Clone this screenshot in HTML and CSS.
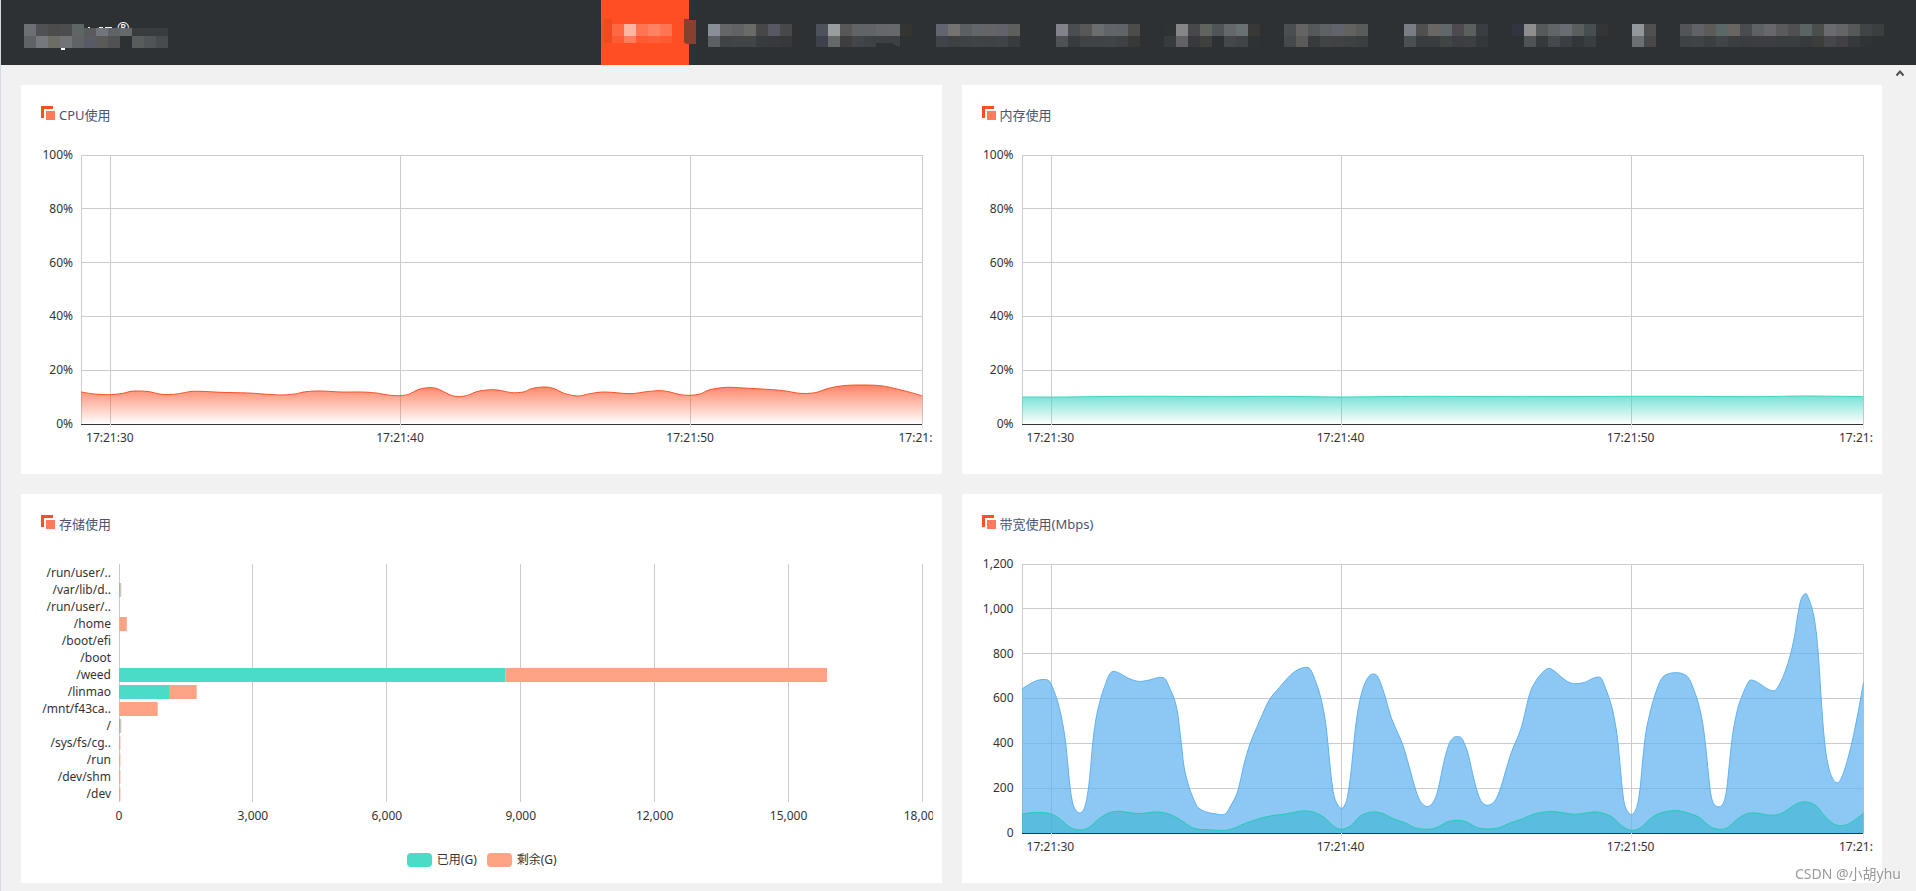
FILE: index.html
```html
<!DOCTYPE html>
<html lang="zh-CN">
<head>
<meta charset="utf-8">
<title>CPU使用</title>
<link rel="stylesheet" href="styles.css">
</head>
<body>
<header class="topbar">
  <a class="logo" href="#">
    <span class="reg">®</span>
    <svg class="mosaic" data-mosaic="logo" width="144" height="28" aria-hidden="true"></svg>
  </a>
  <nav>
    <ul class="nav">
      <li class="active"><a href="#"><svg class="mosaic" data-mosaic="n1" width="84" height="28" aria-hidden="true"></svg></a></li>
      <li><a href="#"><svg class="mosaic" data-mosaic="n2" width="84" height="28" aria-hidden="true"></svg></a></li>
      <li><a href="#"><svg class="mosaic" data-mosaic="n3" width="96" height="28" aria-hidden="true"></svg></a></li>
      <li><a href="#"><svg class="mosaic" data-mosaic="n4" width="96" height="28" aria-hidden="true"></svg></a></li>
      <li><a href="#"><svg class="mosaic" data-mosaic="n5" width="84" height="28" aria-hidden="true"></svg></a></li>
      <li><a href="#"><svg class="mosaic" data-mosaic="n6" width="96" height="28" aria-hidden="true"></svg></a></li>
      <li><a href="#"><svg class="mosaic" data-mosaic="n7" width="96" height="28" aria-hidden="true"></svg></a></li>
      <li><a href="#"><svg class="mosaic" data-mosaic="n8" width="84" height="28" aria-hidden="true"></svg></a></li>
      <li><a href="#"><svg class="mosaic" data-mosaic="n9" width="96" height="28" aria-hidden="true"></svg></a></li>
      <li><a href="#"><svg class="mosaic" data-mosaic="n10" width="24" height="28" aria-hidden="true"></svg></a></li>
      <li><a href="#"><svg class="mosaic" data-mosaic="n11" width="204" height="28" aria-hidden="true"></svg></a></li>
    </ul>
  </nav>
</header>

<div class="page">
  <main class="cards">
    <section class="card">
      <h2 class="title"><svg width="14" height="14" aria-hidden="true"><path d="M0 0h12v3H3v9H0z" fill="#ff4e24"/><path d="M5 5h9v9H5z" fill="#ff7a5c"/></svg>CPU使用</h2>
      <div class="chart">
        <ul class="y-labels"><li>100%</li><li>80%</li><li>60%</li><li>40%</li><li>20%</li><li>0%</li></ul>
        <svg class="plot" id="cpu" aria-hidden="true"></svg>
        <ul class="x-labels time"><li>17:21:30</li><li>17:21:40</li><li>17:21:50</li><li>17:21:</li></ul>
      </div>
    </section>

    <section class="card">
      <h2 class="title"><svg width="14" height="14" aria-hidden="true"><path d="M0 0h12v3H3v9H0z" fill="#ff4e24"/><path d="M5 5h9v9H5z" fill="#ff7a5c"/></svg>内存使用</h2>
      <div class="chart">
        <ul class="y-labels"><li>100%</li><li>80%</li><li>60%</li><li>40%</li><li>20%</li><li>0%</li></ul>
        <svg class="plot" id="memory" aria-hidden="true"></svg>
        <ul class="x-labels time"><li>17:21:30</li><li>17:21:40</li><li>17:21:50</li><li>17:21:</li></ul>
      </div>
    </section>

    <section class="card">
      <h2 class="title"><svg width="14" height="14" aria-hidden="true"><path d="M0 0h12v3H3v9H0z" fill="#ff4e24"/><path d="M5 5h9v9H5z" fill="#ff7a5c"/></svg>存储使用</h2>
      <div class="chart storage">
        <ul class="row-labels">
          <li>/run/user/..</li><li>/var/lib/d..</li><li>/run/user/..</li><li>/home</li><li>/boot/efi</li><li>/boot</li><li>/weed</li><li>/linmao</li><li>/mnt/f43ca..</li><li>/</li><li>/sys/fs/cg..</li><li>/run</li><li>/dev/shm</li><li>/dev</li>
        </ul>
        <svg class="plot" id="storage" aria-hidden="true"></svg>
        <ul class="x-labels size"><li class="zero">0</li><li>3,000</li><li>6,000</li><li>9,000</li><li>12,000</li><li>15,000</li><li>18,000</li></ul>
      </div>
      <ul class="legend">
        <li><i class="swatch used"></i>已用(G)</li>
        <li><i class="swatch free"></i>剩余(G)</li>
      </ul>
    </section>

    <section class="card">
      <h2 class="title"><svg width="14" height="14" aria-hidden="true"><path d="M0 0h12v3H3v9H0z" fill="#ff4e24"/><path d="M5 5h9v9H5z" fill="#ff7a5c"/></svg>带宽使用(Mbps)</h2>
      <div class="chart">
        <ul class="y-labels"><li>1,200</li><li>1,000</li><li>800</li><li>600</li><li>400</li><li>200</li><li>0</li></ul>
        <svg class="plot" id="bandwidth" aria-hidden="true"></svg>
        <ul class="x-labels time"><li>17:21:30</li><li>17:21:40</li><li>17:21:50</li><li>17:21:</li></ul>
      </div>
    </section>
  </main>
  <div class="rail">
    <button type="button" class="scroll-up"><svg width="10" height="8" aria-hidden="true"><path d="M1.5 6.5 5 2.5l3.5 4" fill="none" stroke="#505050" stroke-width="2"/></svg></button>
  </div>
</div>
<p class="watermark">CSDN @小胡yhu</p>
<script src="charts.js"></script>
</body>
</html>
```

FILE: styles.css
```css
* { box-sizing: border-box; }

body {
  margin: 0;
  min-height: 100vh;
  border-left: 1px solid #d5dbe6;
  background: #f1f1f1;
  color: #333;
  font: 12px/18px "Noto Sans", "Noto Sans CJK SC", sans-serif;
  overflow: hidden;
}

ul { list-style: none; margin: 0; padding: 0; }

.topbar {
  display: flex;
  justify-content: space-between;
  height: 65px;
  padding: 0 32px 0 23px;
  background: #2d3134;
}

.mosaic { display: block; overflow: visible; shape-rendering: crispEdges; }

.logo {
  position: relative;
  padding-top: 20px;
  color: #fff;
  text-decoration: none;
}

.logo .reg {
  position: absolute;
  left: 93px;
  top: 18px;
  font-size: 15px;
  line-height: 18px;
}

.logo .mosaic { position: relative; }

.nav { display: flex; gap: 24px; height: 100%; }
.nav a { display: block; height: 100%; padding-top: 20px; }
.nav .active { width: 88px; margin-right: -5px; background: #ff4e24; }

.page { display: flex; }

.cards {
  flex: 1;
  display: grid;
  grid-template-columns: repeat(2, minmax(0, 1fr));
  gap: 20px;
  padding: 20px 0 8px 20px;
}

.card { min-height: 389px; padding: 21px 19px 10px 20px; background: #fff; }

.title {
  display: flex;
  gap: 4px;
  height: 49px;
  margin: 0;
  color: #4c5470;
  font-size: 13px;
  font-weight: 400;
  line-height: 18px;
}

.chart {
  display: grid;
  grid-template-columns: 32px minmax(0, 1fr);
  column-gap: 8px;
}

.plot { display: block; width: 100%; height: 269px; overflow: visible; }

.y-labels {
  display: flex;
  flex-direction: column;
  justify-content: space-between;
  margin: -9px 0;
  text-align: right;
}

.x-labels { grid-column: 2; display: grid; padding-top: 5px; }
.x-labels.time { grid-template-columns: 1fr 10fr 10fr 8fr; }
.x-labels.time li { justify-self: end; width: 48px; margin-right: -24px; }

.storage { grid-template-columns: 70px minmax(0, 1fr); }
.storage .plot { height: 238px; }
.row-labels { text-align: right; }
.row-labels li { height: 17px; line-height: 17px; white-space: nowrap; }

.x-labels.size {
  grid-template-columns: 0 repeat(6, 1fr);
  margin: 0 -10px 0 -20px;
  padding: 5px 10px 0 20px;
  overflow: hidden;
}
.x-labels.size li { justify-self: end; width: 60px; margin-right: -30px; text-align: center; }

.legend { display: flex; justify-content: center; gap: 10px; padding-top: 26px; }
.legend li { display: flex; align-items: center; gap: 5px; }
.swatch { width: 25px; height: 14px; border-radius: 4px; }
.used { background: #4bdcc8; }
.free { background: #fda283; }

.rail { width: 34px; }
.scroll-up { display: block; margin: 4px 0 0 13px; padding: 0; border: 0; background: none; }
.scroll-up svg { display: block; }

.grid-line { stroke: #ccc; shape-rendering: crispEdges; }
.tick { stroke: #e6e6e6; shape-rendering: crispEdges; }
.axis { stroke: #333; shape-rendering: crispEdges; }
.curve { fill: none; vector-effect: non-scaling-stroke; }

.watermark {
  position: fixed;
  right: 15px;
  bottom: 7px;
  margin: 0;
  color: #999;
  font-size: 14px;
  line-height: 20px;
  text-shadow: 1px 1px 0 #fff;
}
```

FILE: charts.js
```js
const NS = 'http://www.w3.org/2000/svg';

function add(parent, tag, attrs) {
  const el = document.createElementNS(NS, tag);
  for (const k in attrs) el.setAttribute(k, attrs[k]);
  parent.appendChild(el);
  return el;
}

/* Header mosaics: cells of 12px, two rows, "-" leaves a cell empty. */
const mosaics = {
  logo: ['6c6f73 4f5152 4c4c4c 4b4d4e 5f6466 - - - - - - -',
         '5f6266 75787d 6d6d66 717476 5f6366 575b66 5b5a59 515053 2d3134 585c5b 505456 484b4d'],
  n1: ['- ff6842 ffb5a4 ff7452 ff8264 ff7452', '- ff5a33 ff7d5c ff5a33 ff5f38 ff5a33'],
  n2: ['888f96 646668 5f6364 696b69 474648 565964 474849', '5a6064 404345 424547 424547 383b3e 37393c 36383b'],
  n3: ['4c525b 9a9da0 575757 606467 606467 66676b 65696b 343533', '3e414b 646869 3f3e3e 42464a 3f4245 - - -'],
  n4: ['62646f 747370 5b5f62 62666a 646365 62636a 5d5f5d -', '404349 3e4143 3f4244 404346 3f4244 404346 393c3e -'],
  n5: ['82838a 4a4e52 575757 6a6e6e 606569 606367 4c4d49', '4e5255 393c3e 404345 404345 414446 3e4144 363938'],
  n6: ['2f3235 868587 47484c 61635e 4e5457 65686a 687273 383837', '373b3e 626165 37393c 3e403f 2d3136 45484a 404446 2f3234'],
  n7: ['4a4e52 656463 53585b 5d6163 61646a 62625f 585d5b -', '45494d 5b5a5b 373b3e 404445 404342 3e4142 3c3f41 -'],
  n8: ['787e83 505051 696663 616869 4e4a50 5a605e 3a3d41', '4a4f52 393d3f 393d3f 3f4543 3c3e44 3d4043 34373a'],
  n9: ['31353f 8f8e8f 565a5a 626567 6a6c73 5a5e5c 464e51 333537', '- 505356 36393c 45484c 3b3e42 323639 3a3e40 -'],
  n10: ['92979b 505050', '6d7073 494748'],
  n11: ['515558 606267 5b5c58 5b6869 696662 4a4d50 5d6064 67676c 5a5a5c 505052 5a6464 4c4e49 696b70 636567 545958 414446 3c3f40',
        '3e4245 404346 3c3f41 424548 3c3f41 3b3e41 3c3e43 3c3e43 3b3e41 3b3e41 36393d 3b3e3b 46474b 424044 36393b 313437 -']
};

document.querySelectorAll('[data-mosaic]').forEach(svg => {
  const name = svg.dataset.mosaic;
  if (name === 'logo') {
    [[60, 12, '5a5a5d'], [72, 12, '72757c'], [84, 12, '606365'], [96, 12, '666969'], [108, 36, '393c3e']]
      .forEach(([x, w, c]) => add(svg, 'rect', { x, y: 8, width: w, height: 8, fill: '#' + c }));
    add(svg, 'path', { d: 'M64 7h2v1h-2zM75 7h4v1h-4zM81 7h7v1h-7zM37 28h4v2h-4z', fill: '#fff' });
  }
  mosaics[name].forEach((row, r) => row.split(' ').forEach((c, i) => {
    if (c !== '-') {
      const h = r === 1 && name !== 'logo' ? 11 : 12;
      add(svg, 'rect', { x: i * 12 - (name === 'n1' ? 1 : 0), y: 4 + r * 12, width: 12, height: name === 'n1' && r ? 7 : h, fill: '#' + c });
    }
  }));
  if (name === 'n1') {
    add(svg, 'rect', { x: 3, y: -1, width: 8, height: 24, fill: '#f14a22' });
    add(svg, 'path', { d: 'M83 -1h5v1h7v24h-10v-1h-2z', fill: '#873f2e' });
  }
  if (name === 'n3') add(svg, 'path', { d: 'M54 16h30v11l-5-2-4-2H54z', fill: '#3d4042' });
});

/* Smooth path through the points. */
function smooth(pts) {
  let d = 'M' + pts[0];
  for (let i = 0; i < pts.length - 1; i++) {
    const a = pts[i - 1] || pts[i], b = pts[i], c = pts[i + 1], e = pts[i + 2] || c;
    d += 'C' + [b[0] + (c[0] - a[0]) / 6, b[1] + (c[1] - a[1]) / 6,
                c[0] - (e[0] - b[0]) / 6, c[1] - (e[1] - b[1]) / 6, c[0], c[1]];
  }
  return d;
}

function parse(text, dy) {
  return text.trim().split(/\s+/).map(p => p.split(',').map(Number)).map(([x, y]) => [x, y + dy]);
}

const seconds = [1, 11, 21, 29];

function timeChart(id, rows, height, series) {
  const svg = document.getElementById(id);
  const line = (x1, y1, x2, y2, cls) => add(svg, 'line', { x1, y1, x2, y2, class: cls });
  for (let i = 0; i < rows; i++) line('0', i / rows * 100 + '%', '100%', i / rows * 100 + '%', 'grid-line');
  [0, ...seconds].forEach(s => line(s / 29 * 100 + '%', '0', s / 29 * 100 + '%', '100%', 'grid-line'));
  line('0', '100%', '100%', '100%', 'axis');
  const ticks = add(svg, 'svg', { y: '100%', height: 5, width: '100%', overflow: 'visible' });
  seconds.forEach(s => add(ticks, 'line', { x1: s / 29 * 100 + '%', x2: s / 29 * 100 + '%', y1: 0, y2: 5, class: 'tick' }));
  const box = add(svg, 'svg', { width: '100%', height: '100%', viewBox: '0 0 2523 ' + height, preserveAspectRatio: 'none', overflow: 'visible' });
  series.forEach(s => {
    let fill = s.fill;
    if (s.fade) {
      const g = add(box, 'linearGradient', { id: id + '-fade', x1: 0, y1: 0, x2: 0, y2: 1 });
      add(g, 'stop', { offset: 0, 'stop-color': s.line, 'stop-opacity': 0.7 });
      add(g, 'stop', { offset: 1, 'stop-color': s.line, 'stop-opacity': 0 });
      fill = 'url(#' + id + '-fade)';
    }
    const d = smooth(s.points);
    add(box, 'path', { d: d + `L2523,${height}L0,${height}Z`, fill });
    add(box, 'path', { d, class: 'curve', stroke: s.line });
  });
}

timeChart('cpu', 5, 807, [{ line: '#ff4e24', fade: true, points: parse(`
  0,99 40,105 87,107 125,103 150,97 175,96 205,98 235,105 261,107 295,104 325,98 360,97 420,100 500,102
  545,105 600,108 640,105 675,98 720,96 780,99 840,99 885,102 920,108 957,110 985,105 1010,92 1040,86
  1065,88 1085,97 1110,109 1135,113 1162,108 1190,97 1231,92 1261,95 1291,101 1326,99 1351,89 1386,84
  1416,88 1451,104 1491,111 1526,104 1571,99 1646,104 1696,98 1736,95 1766,99 1796,107 1827,109 1856,105
  1886,92 1936,85 1986,87 2056,91 2106,95 2156,103 2201,101 2241,88 2286,80 2336,78 2396,80 2446,90
  2486,100 2523,111`, 612) }]);

timeChart('memory', 5, 807, [{ line: '#3ed6c2', fade: true, points: parse(`
  0,726 130,726 300,724 450,724 600,725 760,724 960,726 1200,724 1500,725 1800,724 2000,724 2200,725
  2350,723 2523,725`, 0) }]);

timeChart('bandwidth', 6, 804, [
  { line: '#5db1f0', fill: 'rgba(93,177,240,.7)', points: parse(`
  0,373 26,357 46,348 68,345 80,349 87,358 104,402 118,457 130,527 138,607 146,682 156,727 172,744 186,732
  196,692 204,627 211,547 221,467 236,402 251,357 261,332 273,321 291,326 316,340 336,348 356,351 381,347
  401,341 416,339 430,344 441,367 456,402 466,442 473,497 479,547 486,607 501,667 521,717 531,730 551,741
  576,746 608,748 626,722 644,687 656,642 666,597 684,537 711,472 741,407 771,370 806,331 831,314 851,309
  863,313 873,332 891,382 904,437 913,497 921,577 929,652 938,702 957,730 973,707 984,642 992,567 1000,487
  1012,412 1026,362 1041,335 1055,329 1068,339 1086,387 1108,462 1141,539 1161,607 1181,677 1196,712
  1217,725 1236,707 1249,667 1266,587 1281,537 1294,519 1306,516 1319,522 1336,562 1351,627 1366,684
  1379,712 1396,721 1416,710 1434,672 1466,567 1496,492 1521,392 1539,352 1561,324 1579,312 1596,320
  1621,341 1641,354 1661,358 1686,354 1711,342 1726,338 1737,342 1746,362 1764,412 1776,462 1786,527
  1794,612 1801,682 1809,727 1827,749 1843,727 1853,672 1860,597 1870,507 1886,432 1901,382 1918,342
  1936,329 1958,325 1981,328 1998,340 2011,367 2028,417 2041,477 2050,547 2058,627 2065,687 2074,717
  2090,726 2104,712 2113,672 2121,597 2131,507 2146,432 2161,389 2178,353 2188,347 2206,354 2231,371
  2251,379 2263,373 2281,339 2301,282 2316,217 2326,152 2336,105 2348,89 2356,97 2371,142 2381,202
  2389,292 2396,402 2404,507 2413,582 2426,632 2443,654 2458,637 2476,582 2493,512 2508,437 2523,354`, 0) },
  { line: '#22ccb2', fill: 'rgba(40,178,204,.5)', points: parse(`
  0,747 46,742 87,747 115,763 145,788 172,795 200,788 230,762 261,744 290,739 320,743 356,746 390,742
  416,742 445,749 475,765 505,785 530,793 570,795 608,796 640,788 675,773 735,755 790,747 840,738 875,742
  905,757 935,784 957,793 985,783 1010,757 1035,744 1060,741 1085,747 1115,762 1150,774 1180,789 1217,793
  1245,787 1275,771 1306,766 1335,772 1365,788 1396,792 1430,788 1466,773 1500,762 1540,746 1585,740
  1620,743 1660,748 1715,741 1745,746 1770,757 1800,784 1827,796 1855,788 1885,760 1915,744 1958,737
  1995,744 2030,757 2062,784 2090,793 2115,788 2145,762 2170,748 2197,744 2245,751 2280,744 2320,718
  2350,711 2380,722 2410,757 2440,780 2470,780 2500,763 2523,745`, 0) }
]);

/* Used and free space of each mount, in G. */
const mounts = [[0, 4], [35, 14], [0, 4], [4, 170], [0, 0], [0, 0], [8660, 7200], [1120, 620], [6, 860],
  [35, 14], [0, 30], [0, 30], [0, 30], [0, 30]];
const storage = document.getElementById('storage');
const pct = v => v / 18000 * 100 + '%';
for (let v = 0; v <= 18000; v += 3000) {
  add(storage, 'line', { x1: pct(v), x2: pct(v), y1: 0, y2: '100%', class: 'grid-line' });
}
mounts.forEach(([used, free], i) => {
  const y = i * 17 + 2;
  add(storage, 'rect', { x: 0, y, width: pct(used), height: 14, fill: '#4bdcc8' });
  add(storage, 'rect', { x: pct(used), y, width: pct(free), height: 14, fill: '#fda283' });
});
```
